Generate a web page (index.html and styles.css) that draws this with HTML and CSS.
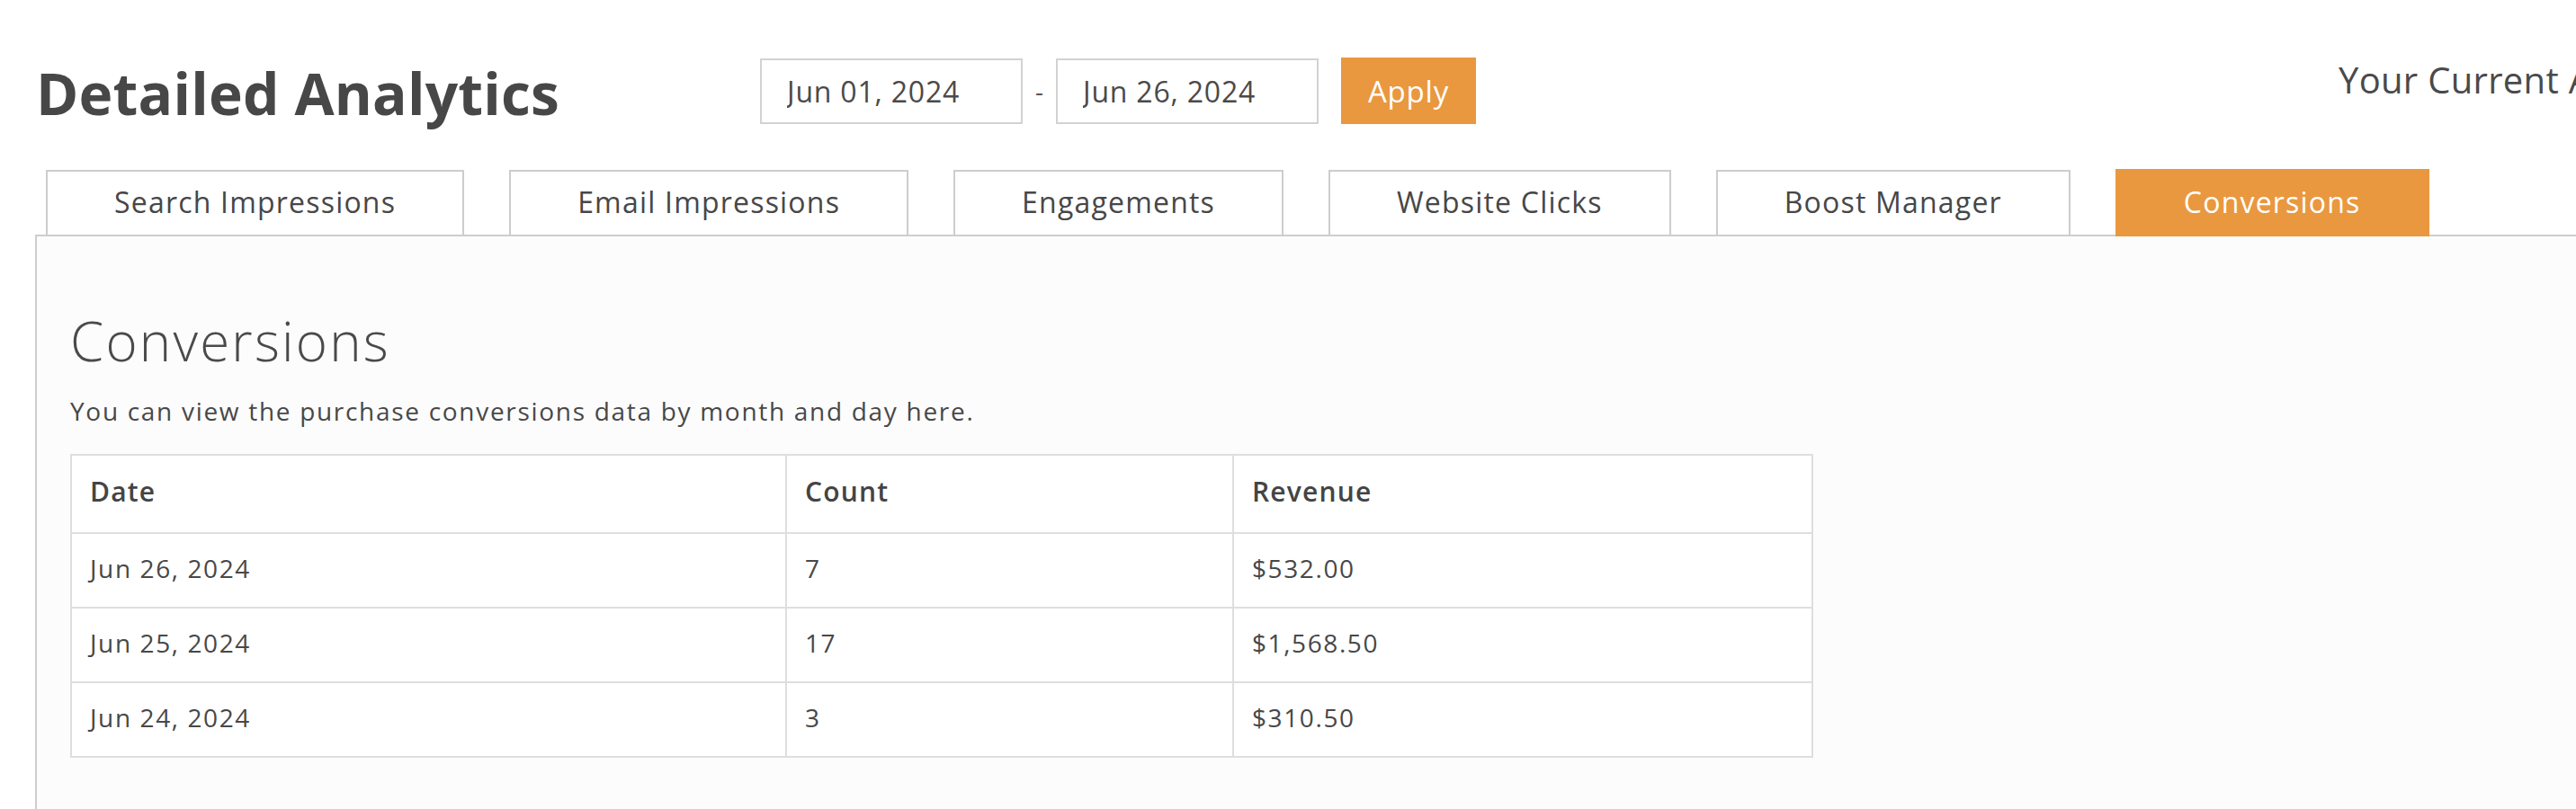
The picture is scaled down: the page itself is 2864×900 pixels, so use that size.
FILE: index.html
```html
<!DOCTYPE html>
<html lang="en">
<head>
<meta charset="utf-8">
<title>Detailed Analytics</title>
<link rel="stylesheet" href="styles.css">
</head>
<body>
<div class="page">
  <header class="header">
    <h1 class="title">Detailed Analytics</h1>
    <div class="range">
      <input class="date-input" type="text" value="Jun 01, 2024">
      <span class="sep">-</span>
      <input class="date-input" type="text" value="Jun 26, 2024">
      <button class="apply" type="button">Apply</button>
    </div>
    <div class="account">Your Current Account</div>
  </header>

  <nav class="tabs">
    <a class="tab">Search Impressions</a>
    <a class="tab">Email Impressions</a>
    <a class="tab">Engagements</a>
    <a class="tab">Website Clicks</a>
    <a class="tab">Boost Manager</a>
    <a class="tab tab-active">Conversions</a>
  </nav>

  <section class="panel">
    <h2 class="panel-title">Conversions</h2>
    <p class="panel-desc">You can view the purchase conversions data by month and day here.</p>
    <table class="data">
      <thead>
        <tr><th class="c1">Date</th><th class="c2">Count</th><th class="c3">Revenue</th></tr>
      </thead>
      <tbody>
        <tr><td>Jun 26, 2024</td><td>7</td><td>$532.00</td></tr>
        <tr><td>Jun 25, 2024</td><td>17</td><td>$1,568.50</td></tr>
        <tr><td>Jun 24, 2024</td><td>3</td><td>$310.50</td></tr>
      </tbody>
    </table>
  </section>
</div>
</body>
</html>
```

FILE: styles.css
```css
html, body {
  margin: 0;
  padding: 0;
  background: #ffffff;
  overflow: hidden;
}

body {
  font-family: "Open Sans", "Noto Sans", sans-serif;
  color: #484848;
}

.page {
  width: 3300px;
  padding-left: 39px;
}

/* ---------- header ---------- */
.header {
  display: flex;
  align-items: flex-start;
  height: 189px;
}

.title {
  flex: 0 0 805px;
  margin: 72px 0 0 1px;
  font-size: 64px;
  line-height: 64px;
  font-weight: 700;
  letter-spacing: 0.2px;
  color: #474747;
}

.range {
  display: flex;
  align-items: center;
  margin-top: 64px;
}

.date-input {
  box-sizing: border-box;
  width: 292px;
  height: 73px;
  margin: 0;
  padding: 0 0 0 28px;
  border: 2px solid #d2d2d2;
  background: #ffffff;
  font-family: "Open Sans", "Noto Sans", sans-serif;
  font-size: 32px;
  letter-spacing: 0.8px;
  color: #4a4a4a;
  outline: none;
}

.sep {
  width: 37px;
  text-align: center;
  font-size: 28px;
  color: #555;
}

.apply {
  box-sizing: border-box;
  width: 150px;
  height: 74px;
  margin-left: 25px;
  border: none;
  background: #e9983f;
  color: #ffffff;
  font-family: "Open Sans", "Noto Sans", sans-serif;
  font-size: 33px;
  letter-spacing: 0.8px;
  padding: 0;
}

.account {
  flex: 0 0 auto;
  margin: 69px 0 0 959px;
  font-size: 40px;
  line-height: 40px;
  letter-spacing: 0.3px;
  white-space: nowrap;
  color: #4a4a4a;
}

/* ---------- tabs ---------- */
.tabs {
  display: flex;
  gap: 50px;
  padding-left: 12px;
  height: 72px;
}

.tab {
  box-sizing: border-box;
  height: 72px;
  padding: 0 74px 3px;
  border: 2px solid #cdcdcd;
  border-bottom: none;
  background: #ffffff;
  font-size: 32px;
  line-height: 67px;
  letter-spacing: 1.2px;
  white-space: nowrap;
  color: #474747;
}

.tab-active {
  position: relative;
  z-index: 1;
  height: 75px;
  margin-top: -1px;
  border-color: #e9983f;
  background: #e9983f;
  color: #ffffff;
  line-height: 69px;
}

/* ---------- panel ---------- */
.panel {
  border-top: 2px solid #cdcdcd;
  border-left: 2px solid #cdcdcd;
  background: #fcfcfc;
  padding: 86px 0 200px 37px;
}

.panel-title {
  margin: 0;
  font-size: 60px;
  line-height: 60px;
  font-weight: 300;
  letter-spacing: 2.2px;
  color: #4a4a4a;
}

.panel-desc {
  margin: 28px 0 28px;
  font-size: 28px;
  line-height: 40px;
  letter-spacing: 1.7px;
  color: #484848;
}

.data {
  width: 1938px;
  border-collapse: collapse;
  background: #ffffff;
  border: 2px solid #dedede;
  font-size: 28px;
  letter-spacing: 1.6px;
  color: #484848;
}

.data th,
.data td {
  border: 2px solid #dedede;
  text-align: left;
  line-height: 40px;
}

.data th {
  padding: 20px 20px 25px;
  font-size: 30px;
  font-weight: 600;
  letter-spacing: 1.2px;
  color: #444444;
}

.data td {
  padding: 18px 20px 23px;
}

.c1 { width: 753px; }
.c2 { width: 455px; }
.c3 { width: auto; }
```
